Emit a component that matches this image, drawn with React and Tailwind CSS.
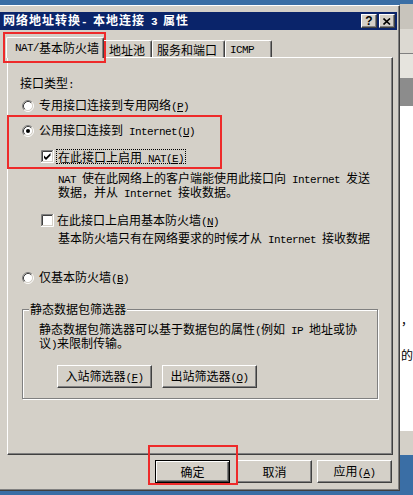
import React from 'react';

// half-width latin in the SimSun look: 6px per glyph
const M = ({ children }) => (
  <span className="font-['Liberation_Mono',monospace] text-[11px] tracking-[-0.6px]">{children}</span>
);

const Key = ({ k }) => (
  <M>(<span className="underline underline-offset-1">{k}</span>)</M>
);

function Radio({ checked }) {
  return (
    <svg width="12" height="12" viewBox="0 0 12 12" className="shrink-0">
      <circle cx="6" cy="6" r="4.5" fill="#fff" />
      <path d="M9.89 2.11 A5.5 5.5 0 0 0 2.11 9.89" stroke="#808080" fill="none" />
      <path d="M2.11 9.89 A5.5 5.5 0 0 0 9.89 2.11" stroke="#fff" fill="none" />
      <path d="M9.18 2.82 A4.5 4.5 0 0 0 2.82 9.18" stroke="#404040" fill="none" />
      <path d="M2.82 9.18 A4.5 4.5 0 0 0 9.18 2.82" stroke="#d4d0c8" fill="none" />
      {checked && <circle cx="6" cy="6" r="2" fill="#000" />}
    </svg>
  );
}

function Check({ checked }) {
  return (
    <svg width="13" height="13" viewBox="0 0 13 13" className="shrink-0">
      <rect x="2" y="2" width="9" height="9" fill="#fff" />
      <path d="M0.5 12 V0.5 H12" stroke="#808080" fill="none" />
      <path d="M1.5 11 V1.5 H11" stroke="#404040" fill="none" />
      <path d="M0 12.5 H12.5 V0" stroke="#fff" fill="none" />
      <path d="M1 11.5 H11.5 V1" stroke="#d4d0c8" fill="none" />
      {checked && <polygon points="3,5.5 5,7.5 9.5,3 9.5,5.5 5,10 3,8" fill="#000" />}
    </svg>
  );
}

const raised =
  'border border-t-white border-l-white border-r-[#404040] border-b-[#404040] shadow-[inset_-1px_-1px_0_#808080]';

function Btn({ children, w = 'w-[75px]', extra = '' }) {
  return (
    <div className={`h-[23px] ${w} ${raised} bg-[#d4d0c8] flex items-center justify-center ${extra}`}>
      <span>{children}</span>
    </div>
  );
}

export default function App() {
  return (
    <div className="w-[413px] h-[495px] bg-[#3a6ea5] flex items-start overflow-hidden relative text-[12px] leading-[12px] text-black font-['Noto_Sans_CJK_SC',sans-serif]">
      {/* dialog */}
      <div className="w-[400px] h-[486px] mt-[5px] bg-[#d4d0c8] border-t border-t-white border-r border-r-[#404040] border-b border-b-[#404040] shadow-[inset_-1px_-1px_0_#808080] pt-[6px] pr-[2px] flex flex-col shrink-0">
        {/* title bar */}
        <div className="h-[18px] bg-[#0a246a] flex items-center pl-[3px] pr-[2px]">
          <span className="text-white font-bold tracking-[1px] flex-1">
            网络地址转换<M>- </M>本地连接<M> 3 </M>属性
          </span>
          <div className={`w-[16px] h-[14px] ${raised} bg-[#d4d0c8] flex items-center justify-center`}>
            <span className="font-['Liberation_Sans',sans-serif] font-bold text-[12px] leading-[12px] -mt-px">?</span>
          </div>
          <div className={`w-[16px] h-[14px] ml-[2px] ${raised} bg-[#d4d0c8] flex items-center justify-center`}>
            <svg width="8" height="7" viewBox="0 0 8 7">
              <path d="M0.5 0.5 L7 6.5 M7 0.5 L0.5 6.5" stroke="#000" strokeWidth="1.6" />
            </svg>
          </div>
        </div>

        {/* tabs */}
        <div className="flex items-end ml-[6px] mt-[7px] h-[21px] -mb-px relative z-10">
          <div className="h-[21px] w-[98px] pl-[8px] bg-[#d4d0c8] border-t border-l border-t-white border-l-white border-r border-r-[#404040] shadow-[inset_-1px_0_0_#808080] rounded-t-[2px] flex items-center -mt-px">
            <M>NAT/</M>基本防火墙
          </div>
          <div className="h-[17px] w-[48px] mb-px pl-[5px] border-t border-t-white border-r border-r-[#404040] shadow-[inset_-1px_0_0_#808080] rounded-tr-[2px] flex items-center pt-px">
            地址池
          </div>
          <div className="h-[17px] w-[73px] mb-px pl-[4px] border-t border-l border-t-white border-l-white border-r border-r-[#404040] shadow-[inset_-1px_0_0_#808080] rounded-t-[2px] flex items-center pt-px">
            服务和端口
          </div>
          <div className="h-[17px] w-[47px] mb-px pl-[4px] border-t border-l border-t-white border-l-white border-r border-r-[#404040] shadow-[inset_-1px_0_0_#808080] rounded-t-[2px] flex items-center pt-px">
            <M>ICMP</M>
          </div>
        </div>

        {/* tab page */}
        <div className="ml-[7px] w-[386px] h-[398px] border border-t-white border-l-white border-r-[#404040] border-b-[#404040] shadow-[inset_-1px_-1px_0_#808080] flex flex-col items-start">
          <div className="mt-[19px] ml-[12px]">
            接口类型<M>:</M>
          </div>
          <div className="mt-[9px] ml-[14px] h-[12px] flex items-center gap-[5px]">
            <Radio />
            <span>
              专用接口连接到专用网络<Key k="P" />
            </span>
          </div>
          <div className="mt-[13px] ml-[14px] h-[12px] flex items-center gap-[5px]">
            <Radio checked />
            <span>
              公用接口连接到<M> Internet</M>
              <Key k="U" />
            </span>
          </div>
          <div className="mt-[13px] ml-[33px] h-[13px] flex items-center gap-[2px]">
            <Check checked />
            <span className="block h-[15px] px-px border border-dotted border-black leading-[13px] whitespace-nowrap">
              在此接口上启用<M> NAT</M>
              <Key k="E" />
            </span>
          </div>
          <div className="mt-[9px] ml-[50px]">
            <M>NAT </M>使在此网络上的客户端能使用此接口向<M> Internet </M>发送
            <br />
            数据，并从<M> Internet </M>接收数据。
          </div>
          <div className="mt-[14px] ml-[33px] h-[13px] flex items-center gap-[3px]">
            <Check />
            <span>
              在此接口上启用基本防火墙<Key k="N" />
            </span>
          </div>
          <div className="mt-[5px] ml-[50px]">
            基本防火墙只有在网络要求的时候才从<M> Internet </M>接收数据
          </div>
          <div className="mt-[26px] ml-[14px] h-[12px] flex items-center gap-[5px]">
            <Radio />
            <span>
              仅基本防火墙<Key k="B" />
            </span>
          </div>

          <fieldset className="mt-[19px] ml-[14px] w-[356px] h-[96px] border border-[#808080] shadow-[inset_1px_1px_0_#fff,1px_1px_0_#fff]">
            <legend className="ml-[6px] px-px bg-[#d4d0c8] leading-[12px]">静态数据包筛选器</legend>
            <div className="mt-[8px] pl-[16px]">
              静态数据包筛选器可以基于数据包的属性<M>(</M>例如<M> IP </M>地址或协
              <br />
              议<M>)</M>来限制传输。
            </div>
            <div className="mt-[14px] ml-[34px] flex gap-[10px]">
              <Btn w="w-[95px]">
                入站筛选器<Key k="F" />
              </Btn>
              <Btn w="w-[95px]">
                出站筛选器<Key k="O" />
              </Btn>
            </div>
          </fieldset>
        </div>

        {/* dialog buttons */}
        <div className="mt-[5px] flex">
          <div className="ml-[155px] w-[75px] h-[23px] border border-black bg-[#d4d0c8] shadow-[inset_1px_1px_0_#fff,inset_-1px_-1px_0_#404040,inset_-2px_-2px_0_#808080] flex items-center justify-center">
            确定
          </div>
          <Btn extra="ml-[7px]">取消</Btn>
          <Btn extra="ml-[5px]">
            应用<Key k="A" />
          </Btn>
        </div>
      </div>

      {/* window behind, on the right */}
      <div className="flex-1 mt-[4px] flex flex-col">
        <div className="h-[25px] bg-[#c8c4bc]" />
        <div className="h-[24px] bg-[#dcd9d2]" />
        <div className="h-px bg-[#808080]" />
        <div className="h-[24px] bg-[#e6e4de]" />
        <div className="h-[28px] bg-[#8c8c8c]" />
        <div className="h-[324px] bg-white pl-px flex flex-col">
          <span className="mt-[208px]">，</span>
          <span className="mt-[23px]">的</span>
        </div>
        <div className="h-[25px] bg-[#d4d0c8] border-t border-t-white" />
      </div>

      {/* red annotation boxes */}
      <div className="absolute left-[3px] top-[32px] w-[103px] h-[31px] border-2 border-[#ee2a2a]" />
      <div className="absolute left-[7px] top-[115px] w-[215px] h-[54px] border-2 border-[#ee2a2a]" />
      <div className="absolute left-[148px] top-[445px] w-[90px] h-[40px] border-2 border-[#ee2a2a]" />
    </div>
  );
}
